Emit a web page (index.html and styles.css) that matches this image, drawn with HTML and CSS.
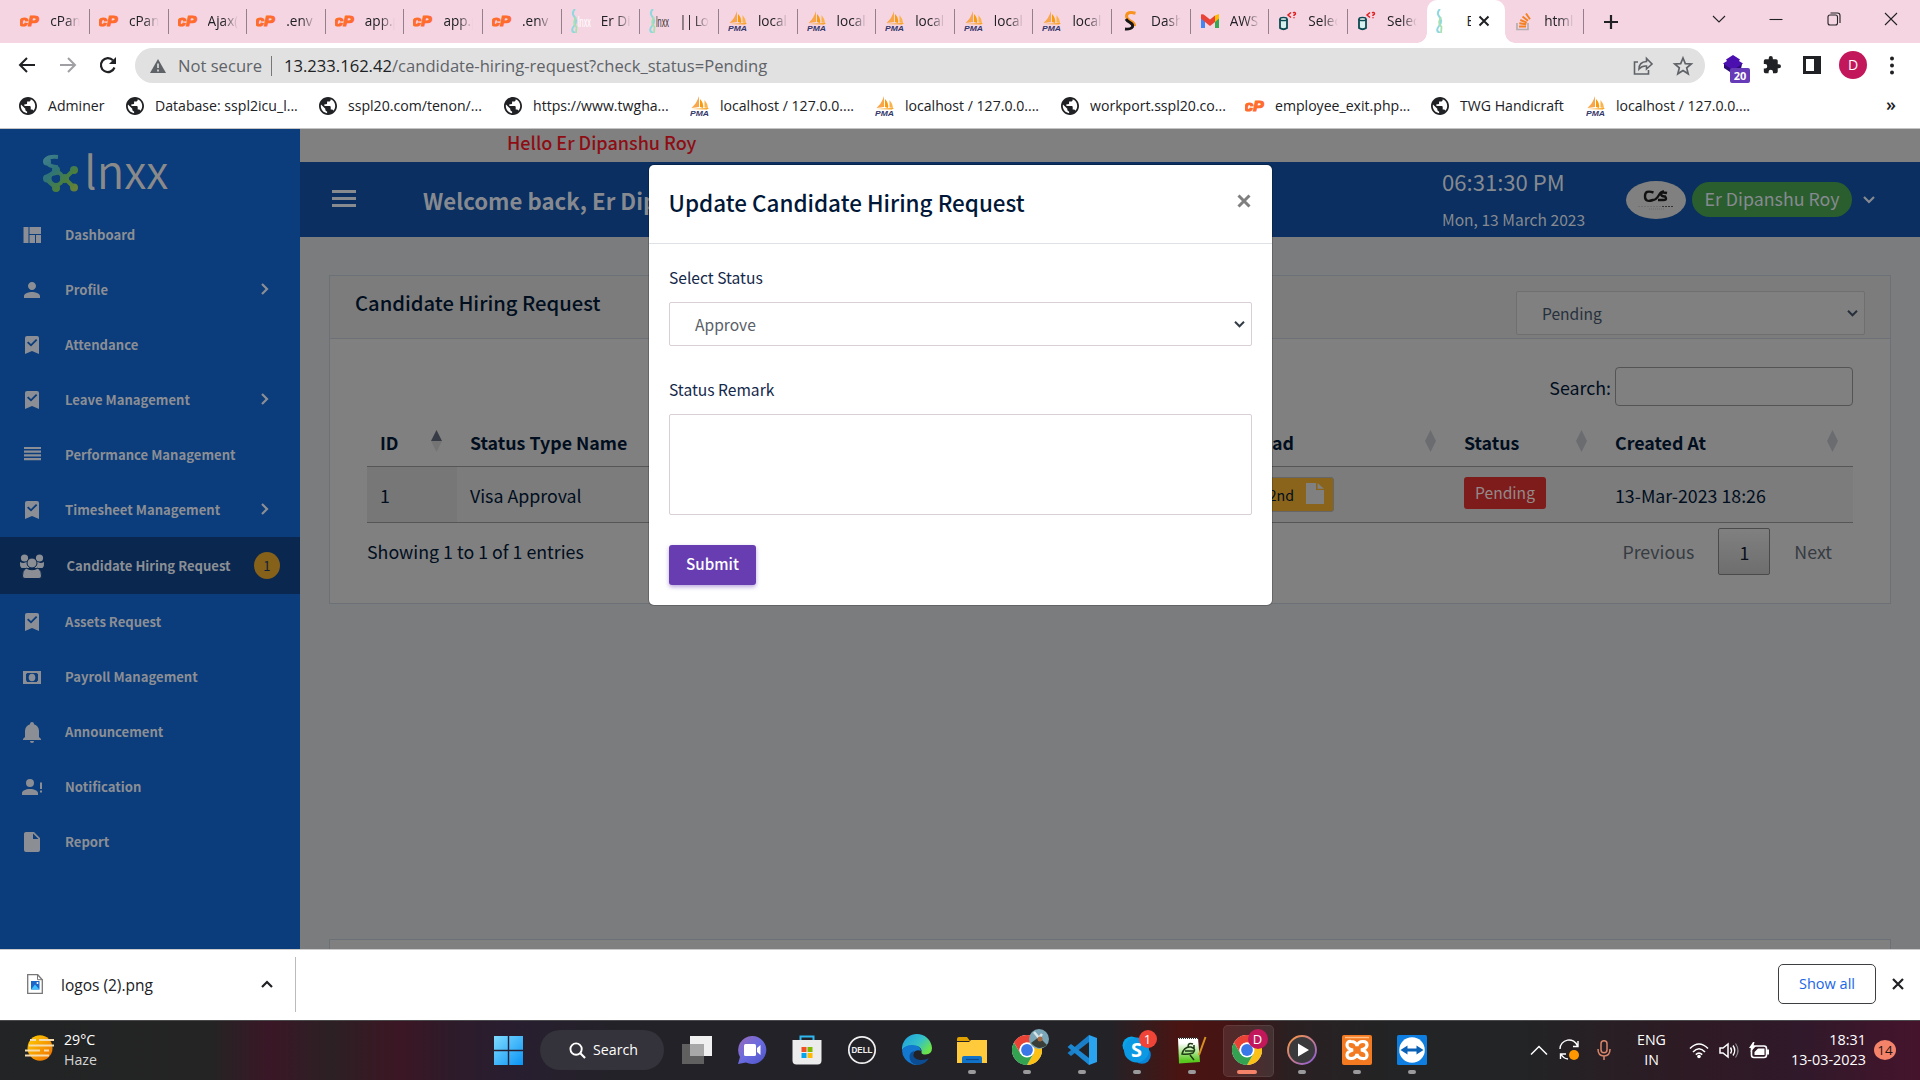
FILE: index.html
```html
<!DOCTYPE html>
<html lang="en">
<head>
<meta charset="utf-8">
<title>Candidate Hiring Request</title>
<link rel="stylesheet" href="styles.css">
</head>
<body>
<svg class="defs" width="0" height="0">
  <defs>
    <linearGradient id="gWin" x1="0" y1="0" x2="1" y2="1"><stop offset="0" stop-color="#7fdcff"/><stop offset="1" stop-color="#0a93f5"/></linearGradient>
    <linearGradient id="gSun" x1="0" y1="0" x2="1" y2="1"><stop offset="0" stop-color="#ffd000"/><stop offset="1" stop-color="#ee6a00"/></linearGradient>
    <linearGradient id="gChat" x1="0" y1="0" x2="1" y2="1"><stop offset="0" stop-color="#9a6bb8"/><stop offset=".5" stop-color="#6a6be0"/><stop offset="1" stop-color="#4f52c8"/></linearGradient>
    <linearGradient id="gEdge" x1="0" y1="0" x2="1" y2=".6"><stop offset="0" stop-color="#1b9de2"/><stop offset=".6" stop-color="#35c1c8"/><stop offset="1" stop-color="#6be34a"/></linearGradient>
    <linearGradient id="gRing" x1="0" y1="0" x2="1" y2="1"><stop offset="0" stop-color="#ff9a3c"/><stop offset="1" stop-color="#8a5be0"/></linearGradient>
    <linearGradient id="gNote" x1="0" y1="0" x2="0" y2="1"><stop offset=".2" stop-color="#fff"/><stop offset=".9" stop-color="#58c81e"/></linearGradient>
    <linearGradient id="gLogo" gradientUnits="userSpaceOnUse" x1="0" y1="0" x2="33" y2="33"><stop offset="0" stop-color="#43808f"/><stop offset=".4" stop-color="#2f7478"/><stop offset=".75" stop-color="#4b7f3c"/><stop offset="1" stop-color="#66803a"/></linearGradient>
    <symbol id="cp" viewBox="0 0 20 16"><text x="-.5" y="12.5" font-family="Liberation Sans, sans-serif" font-weight="700" font-style="italic" font-size="15" fill="#ff6c2c" stroke="#ff6c2c" stroke-width="1.200" textLength="19" lengthAdjust="spacingAndGlyphs">cP</text></symbol>
    <symbol id="pma" viewBox="0 0 20 20"><path d="M9 0 L9 11 L1.500 12 Q7 7 9 0z" fill="#f9a64a"/><path d="M10 3 Q14 7 13 12 L10 11z" fill="#f89c0e"/><path d="M14.500 4 Q18 8 18 12 L14.500 11.500z" fill="#fbb24a"/><path d="M1 13 L19 12 L17 13.500z" fill="#f89c0e"/><text x="0" y="19.500" font-family="Liberation Sans, sans-serif" font-weight="700" font-style="italic" font-size="8" fill="#33376a" textLength="19" lengthAdjust="spacingAndGlyphs">PMA</text></symbol>
    <symbol id="globe" viewBox="2 2 20 20"><circle cx="12" cy="12" r="9" fill="#fff"/><path fill="#202124" d="M12 2C6.480 2 2 6.480 2 12s4.480 10 10 10 10-4.480 10-10S17.520 2 12 2zm-1 17.930c-3.950-.490-7-3.850-7-7.930 0-.620.080-1.210.210-1.790L9 15v1c0 1.100.900 2 2 2v1.930zm6.900-2.540c-.260-.810-1-1.390-1.900-1.390h-1v-3c0-.550-.450-1-1-1H8v-2h2c.550 0 1-.450 1-1V7h2c1.100 0 2-.900 2-2v-.410c2.930 1.190 5 4.060 5 7.410 0 2.080-.800 3.970-2.100 5.390z"/></symbol>
    <symbol id="db" viewBox="0 0 20 20"><path d="M2 8v9q3.500 2.500 7 0V8" fill="#d8f0f0" stroke="#0d4a52" stroke-width="1.800"/><ellipse cx="5.500" cy="8" rx="3.500" ry="1.600" fill="#fff" stroke="#0d4a52" stroke-width="1.500"/><path d="M13 1.500 10 4l3 2.500M15 1.800q2-.8 2.500.6.2 1-1.500 1.800v.8M16 6.300v1" fill="none" stroke="#e02020" stroke-width="1.500"/></symbol>
    <symbol id="helix" viewBox="0 0 20 24"><path d="M4 0Q0 4 3.500 8T3 17 4 24" fill="none" stroke="#8fd8e0" stroke-width="2"/><path d="M5 8Q1 14 5.500 18L5 24" fill="none" stroke="#a8e0b0" stroke-width="1.800"/></symbol>
    <symbol id="chev" viewBox="0 0 10 14"><path d="M2 2l5 5-5 5" fill="none" stroke="currentColor" stroke-width="2.200"/></symbol>
    <symbol id="down" viewBox="0 0 14 10"><path d="M2 2l5 5 5-5" fill="none" stroke="currentColor" stroke-width="2.200"/></symbol>
    <symbol id="mark" viewBox="0 0 24 24"><path fill="currentColor" fill-rule="evenodd" d="M17 3H7a2 2 0 0 0-2 2v16l7-3 7 3V5a2 2 0 0 0-2-2zM11 13.500 7 9.800l1.300-1.300L11 11l5-5 1.300 1.300z"/></symbol>
    <symbol id="chrome" viewBox="0 0 30 30"><circle cx="15" cy="15" r="15" fill="#fff"/><path d="M28 7.500A15 15 0 0 1 15 30l6.500-11.300L15 7.500z" fill="#fbc116"/><path d="M2 7.500A15 15 0 0 0 15 30l6.500-11.300-13 0z" fill="#33a352"/><path d="M2 7.500A15 15 0 0 1 28 7.500H15a7.500 7.500 0 0 0-6.500 11.250z" fill="#ea4335"/><circle cx="15" cy="15" r="7.500" fill="#fff"/><circle cx="15" cy="15" r="5.900" fill="#3b78e7"/></symbol>
  </defs>
</svg>

<div class="tabs">
  <div class="tab"><svg class="fav"><use href="#cp"/></svg><span>cPane</span></div>
  <div class="tab"><svg class="fav"><use href="#cp"/></svg><span>cPane</span></div>
  <div class="tab"><svg class="fav"><use href="#cp"/></svg><span>Ajax(</span></div>
  <div class="tab"><svg class="fav"><use href="#cp"/></svg><span>.env</span></div>
  <div class="tab"><svg class="fav"><use href="#cp"/></svg><span>app.p</span></div>
  <div class="tab"><svg class="fav"><use href="#cp"/></svg><span>app.p</span></div>
  <div class="tab"><svg class="fav"><use href="#cp"/></svg><span>.env</span></div>
  <div class="tab"><svg class="fav lx" viewBox="0 0 20 24"><use href="#helix" width="20" height="24"/><text x="7" y="18" class="lxt" fill="#fff" textLength="13" lengthAdjust="spacingAndGlyphs">lnxx</text></svg><span>Er Dip</span></div>
  <div class="tab"><svg class="fav lx" viewBox="0 0 20 24"><use href="#helix" width="20" height="24"/><text x="7" y="18" class="lxt" fill="#333" textLength="13" lengthAdjust="spacingAndGlyphs">lnxx</text></svg><span class="tight">|| Log</span></div>
  <div class="tab"><svg class="fav"><use href="#pma"/></svg><span>localh</span></div>
  <div class="tab"><svg class="fav"><use href="#pma"/></svg><span>localh</span></div>
  <div class="tab"><svg class="fav"><use href="#pma"/></svg><span>localh</span></div>
  <div class="tab"><svg class="fav"><use href="#pma"/></svg><span>localh</span></div>
  <div class="tab"><svg class="fav"><use href="#pma"/></svg><span>localh</span></div>
  <div class="tab"><svg class="fav" viewBox="0 0 20 20"><path d="M14.500 2.200Q6 0 5.500 5q0 3 4 5 4.500 2 4 5" fill="none" stroke="#f7931e" stroke-width="3"/><path d="M5 8q1 2 4 3.500 3.500 2 2.500 4.500Q9.500 18.500 4 18" fill="none" stroke="#161616" stroke-width="2.800"/></svg><span>Dash</span></div>
  <div class="tab"><svg class="fav" viewBox="0 0 20 20"><path d="M1 5v12h4V9z" fill="#4285f4"/><path d="M19 5v12h-4V9z" fill="#34a853"/><path d="M15 4.500 19 3v4.500L15 11z" fill="#fbbc04"/><path d="M1 3.500Q3 2.500 5 4.500l5 4 5-4V11l-5 4-5-4-4-3.500z" fill="#ea4335"/></svg><span>AWS</span></div>
  <div class="tab"><svg class="fav"><use href="#db"/></svg><span>Select</span></div>
  <div class="tab nosep"><svg class="fav"><use href="#db"/></svg><span>Select</span></div>
  <div class="tab active"><svg class="fav lx" viewBox="0 0 20 24"><use href="#helix" width="20" height="24"/></svg><span>Er</span><svg class="tx" viewBox="0 0 12 12"><path d="M1.500 1.500l9 9m0-9l-9 9" stroke="#202124" stroke-width="2"/></svg></div>
  <div class="tab"><svg class="fav" viewBox="0 0 20 20"><path d="M3 12v6.500h11V12" fill="none" stroke="#b5aeb0" stroke-width="1.700"/><path d="M5 15.500h7M5.300 12.300l7 1M6.300 9l6.500 2.600M8.500 5.500l5.500 4.300M12 2.500l4 5.700" stroke="#f48024" stroke-width="1.900"/></svg><span>html</span></div>
  <svg class="plus" viewBox="0 0 16 16"><path d="M8 1v14M1 8h14" stroke="#202124" stroke-width="2.200"/></svg>
  <div class="wbtns">
    <svg viewBox="0 0 14 14"><path d="M1 4l6 6 6-6" class="thin"/></svg>
    <svg viewBox="0 0 14 14"><path d="M.5 7.500h13" class="thin"/></svg>
    <svg viewBox="0 0 14 14"><rect x="1" y="3" width="9.500" height="10" rx="2" class="thin"/><path d="M3.500 1h7q2.500 0 2.500 2.500V11" class="thin"/></svg>
    <svg viewBox="0 0 14 14"><path d="M1 1l12 12M13 1L1 13" class="thin"/></svg>
  </div>
</div>

<div class="toolbar">
  <div class="nav">
    <svg viewBox="0 0 18 18"><path d="M17 9H2M9 2L2 9l7 7" fill="none" stroke="#202124" stroke-width="2"/></svg>
    <svg viewBox="0 0 18 18"><path d="M1 9h15M9 2l7 7-7 7" fill="none" stroke="#a0a0a4" stroke-width="2"/></svg>
    <svg viewBox="0 0 18 18"><path d="M15.500 11.500A7 7 0 1 1 14 4.200" fill="none" stroke="#202124" stroke-width="2.200"/><path d="M17 1v7h-7z" fill="#202124"/></svg>
  </div>
  <div class="omni">
    <svg class="warn" viewBox="0 0 16 14"><path d="M8 0l8 14H0z" fill="#5f6368"/><path d="M8 4.500v4.500M8 10.500v2" stroke="#e1e1e1" stroke-width="1.600"/></svg>
    <span class="ns">Not secure</span><i></i>
    <span class="url"><b>13.233.162.42</b>/candidate-hiring-request?check_status=Pending</span>
    <svg class="share" viewBox="0 0 20 18"><path d="M5 5H1.500v12h14v-4M6 12q0-7 7.500-7.500V1.500L19 7l-5.500 5V9Q9 8.500 6 12z" fill="none" stroke="#5f6368" stroke-width="1.600"/></svg>
    <svg class="star" viewBox="0 0 20 20"><path d="M10 2l2.300 5.600 6 .4-4.600 3.900 1.500 5.900L10 14.500l-5.200 3.300 1.500-5.900L1.700 8l6-.4z" fill="none" stroke="#5f6368" stroke-width="1.700"/></svg>
  </div>
  <div class="exts">
    <div class="ext"><svg viewBox="0 0 20 20"><path d="M1 9l9-5 9 5-1 5-8 5-9-6z" fill="#2c0a78"/><path d="M10 0l7 4.500-1 1.500 4 2.500L10 15 0 8.500 4 6 3 4.500z" fill="#4b0fb0"/></svg><em>20</em></div>
    <svg class="puz" viewBox="1 1 22 22"><path fill="#202124" d="M20.500 11H19V7c0-1.100-.9-2-2-2h-4V3.500a2.500 2.500 0 0 0-5 0V5H4a2 2 0 0 0-2 2v3.800h1.500a2.700 2.700 0 0 1 0 5.400H2V20a2 2 0 0 0 2 2h3.800v-1.500a2.700 2.700 0 0 1 5.400 0V22H17a2 2 0 0 0 2-2v-4h1.500a2.500 2.500 0 0 0 0-5z"/></svg>
    <svg class="side" viewBox="0 0 18 18"><rect x="1.500" y="1.500" width="15" height="15" fill="none" stroke="#202124" stroke-width="3"/><path d="M11 1h6v16h-6z" fill="#202124"/></svg>
    <div class="ava">D</div>
    <svg class="dots" viewBox="0 0 6 18"><circle cx="3" cy="2" r="2"/><circle cx="3" cy="9" r="2"/><circle cx="3" cy="16" r="2"/></svg>
  </div>
</div>

<div class="marks">
  <div class="bm w1"><svg><use href="#globe"/></svg>Adminer</div>
  <div class="bm w2"><svg><use href="#globe"/></svg>Database: sspl2icu_l...</div>
  <div class="bm w3"><svg><use href="#globe"/></svg>sspl20.com/tenon/...</div>
  <div class="bm w4"><svg><use href="#globe"/></svg>https://www.twgha...</div>
  <div class="bm w5"><svg class="p"><use href="#pma"/></svg>localhost / 127.0.0....</div>
  <div class="bm w5"><svg class="p"><use href="#pma"/></svg>localhost / 127.0.0....</div>
  <div class="bm w5"><svg><use href="#globe"/></svg>workport.sspl20.co...</div>
  <div class="bm w5"><svg class="p"><use href="#cp"/></svg>employee_exit.php...</div>
  <div class="bm w6"><svg><use href="#globe"/></svg>TWG Handicraft</div>
  <div class="bm w5"><svg class="p"><use href="#pma"/></svg>localhost / 127.0.0....</div>
  <span class="more">»</span>
</div>

<div class="page">
  <aside>
    <div class="logo">
      <svg viewBox="0 0 35 37"><g stroke="url(#gLogo)" fill="none" stroke-width="4"><path d="M15 2Q3 1 3 6q2 5 10 6v6Q3 20 4 24q2 4 9 8"/><circle cx="13" cy="23.500" r="6.500"/><path d="M22 23.500l9-9M22 23.500l9 9"/></g><g fill="url(#gLogo)"><circle cx="4" cy="6.500" r="4"/><circle cx="13" cy="15" r="4"/><circle cx="4" cy="23.500" r="4"/><circle cx="13" cy="33" r="4"/><circle cx="31" cy="15" r="4"/><circle cx="31" cy="32.500" r="4"/><circle cx="21.500" cy="23.500" r="4.500"/></g></svg>
      <span>lnxx</span>
    </div>
    <div class="item"><svg viewBox="0 0 24 24"><path fill="currentColor" d="M9.500 20H15v-8H9.500zM3.500 20h5V4h-5zM16 20h5v-8h-5zM9.500 4v7H21V4z"/></svg><span>Dashboard</span></div>
    <div class="item"><svg viewBox="0 0 24 24"><path fill="currentColor" d="M12 12c2.210 0 4-1.790 4-4s-1.790-4-4-4-4 1.790-4 4 1.790 4 4 4zm0 2c-2.670 0-8 1.340-8 4v2h16v-2c0-2.660-5.330-4-8-4z"/></svg><span>Profile</span><svg class="chev"><use href="#chev"/></svg></div>
    <div class="item"><svg><use href="#mark"/></svg><span>Attendance</span></div>
    <div class="item"><svg><use href="#mark"/></svg><span>Leave Management</span><svg class="chev"><use href="#chev"/></svg></div>
    <div class="item"><svg viewBox="0 0 24 24"><path stroke="currentColor" stroke-width="2.200" d="M4 5h17M4 8.700h17M4 12.400h17M4 16.100h17"/></svg><span>Performance Management</span></div>
    <div class="item"><svg><use href="#mark"/></svg><span>Timesheet Management</span><svg class="chev"><use href="#chev"/></svg></div>
    <div class="item on"><svg viewBox="0 0 26 26"><g fill="currentColor"><circle cx="5.500" cy="5" r="3.600"/><circle cx="20.500" cy="5" r="3.600"/><path d="M1 9q4 2 7-.5 0 5 3 6.500H2.500Q.5 13 1 9zM25 9q-4 2-7-.5 0 5-3 6.500h8.500q2-2 1.500-6z"/><circle cx="13" cy="10" r="5" stroke="#0a274f"/><path d="M7 15q6 3.500 12 0 4 3 3.500 8 0 2.500-2.500 2.500H6Q3.500 25.500 3.500 23 3 18 7 15z" stroke="#0a274f"/></g></svg><span>Candidate Hiring Request</span><b>1</b></div>
    <div class="item"><svg><use href="#mark"/></svg><span>Assets Request</span></div>
    <div class="item"><svg viewBox="0 0 24 24"><path fill="currentColor" fill-rule="evenodd" d="M3 6h18v13H3zM6 9v7q0-2 1 1h10q0-2 1-1V9q-1 0-1-1H7q0 1-1 1z"/><ellipse cx="12" cy="12.500" rx="3.300" ry="3.800" fill="currentColor"/></svg><span>Payroll Management</span></div>
    <div class="item"><svg viewBox="0 0 24 24"><path fill="currentColor" d="M21 19v1H3v-1l2-2v-6c0-3.100 2.030-5.830 5-6.710V4a2 2 0 0 1 4 0v.290c2.970.880 5 3.610 5 6.710v6l2 2m-7 2a2 2 0 0 1-4 0"/></svg><span>Announcement</span></div>
    <div class="item"><svg viewBox="0 0 24 24"><path fill="currentColor" d="M10 4a4 4 0 1 1 0 8 4 4 0 0 1 0-8m0 10c4.420 0 8 1.790 8 4v2H2v-2c0-2.210 3.580-4 8-4m10 0V7.500h2V14h-2m0 3.500v-2h2v2z"/></svg><span>Notification</span></div>
    <div class="item"><svg viewBox="0 0 24 24"><path fill="currentColor" d="M13 9V3.500L18.500 9M6 2c-1.110 0-2 .890-2 2v16a2 2 0 0 0 2 2h12a2 2 0 0 0 2-2V8l-6-6H6z"/></svg><span>Report</span></div>
  </aside>

  <main>
    <div class="hello">Hello Er Dipanshu Roy</div>
    <header>
      <div class="burger"><i></i><i></i><i></i></div>
      <div class="welcome">Welcome back, Er Dipanshu Roy</div>
      <div class="clock"><div class="time">06:31:30 PM</div><div class="date">Mon, 13 March 2023</div></div>
      <svg class="co" viewBox="0 0 60 38"><ellipse cx="30" cy="19" rx="30" ry="19" fill="#808080"/><path d="M27.500 11.500q-8.500-3-8.500 3.700t8 3.800q3 0 6-5 2-3.500 5-3.500M41 12q-6-1.500-6 1t4 2.500q3 4-3 3.500l-4 0" fill="none" stroke="#111" stroke-width="2.400"/><path d="M12 25.500h24" stroke="#707070" stroke-dasharray="2 1"/><path d="M36 25.500h12" stroke="#333" stroke-dasharray="2 1"/><path d="M23 28h15" stroke="#6a6a6a" stroke-dasharray="1 1"/></svg>
      <div class="user">Er Dipanshu Roy</div>
      <svg class="ud"><use href="#down"/></svg>
    </header>
    <section class="card">
      <div class="chead"><h2>Candidate Hiring Request</h2><div class="select">Pending<svg><use href="#down"/></svg></div></div>
      <div class="cbody">
        <div class="search">Search:<div class="inp"></div></div>
        <div class="tr th">
          <div>ID<svg class="sort" viewBox="0 0 11 22"><path d="M5.500 0L11 11H0z" fill="#363b46"/><path d="M5.500 22L0 11h11z" fill="#747474"/></svg></div>
          <div>Status Type Name</div>
          <div>Download<svg class="sort" viewBox="0 0 11 22"><path d="M5.500 0L11 11 5.500 22 0 11z" fill="#6a6c70"/></svg></div>
          <div>Status<svg class="sort" viewBox="0 0 11 22"><path d="M5.500 0L11 11 5.500 22 0 11z" fill="#6a6c70"/></svg></div>
          <div>Created At<svg class="sort" viewBox="0 0 11 22"><path d="M5.500 0L11 11 5.500 22 0 11z" fill="#6a6c70"/></svg></div>
        </div>
        <div class="tr td">
          <div>1</div>
          <div>Visa Approval</div>
          <div><span class="doc">2nd<svg viewBox="0 0 18 21"><path d="M0 0h10v7h8v14H0z" fill="#808080"/><path d="M11.500 0v5.800H18z" fill="#808080"/></svg></span></div>
          <div><span class="pend">Pending</span></div>
          <div>13-Mar-2023 18:26</div>
        </div>
        <div class="foot"><span class="info">Showing 1 to 1 of 1 entries</span><span class="pg">Previous</span><span class="pg cur">1</span><span class="pg">Next</span></div>
      </div>
    </section>
    <section class="card2"></section>
  </main>

  <div class="modal">
    <div class="mhead"><h1>Update Candidate Hiring Request</h1><svg viewBox="0 0 14 14"><path d="M1.500 1.500l11 11m0-11l-11 11" stroke="#7f7f7f" stroke-width="3"/></svg></div>
    <div class="mbody">
      <label>Select Status</label>
      <div class="select">Approve<svg><use href="#down"/></svg></div>
      <label>Status Remark</label>
      <div class="area"></div>
      <div class="btn">Submit</div>
    </div>
  </div>
</div>

<div class="dl">
  <svg class="file" viewBox="0 0 16 20"><path d="M.700.700h10l4.600 5v13.600H.700z" fill="#fff" stroke="#777" stroke-width="1.300"/><path d="M10.500.700v5h5" fill="none" stroke="#777"/><rect x="4" y="7" width="8.500" height="8.500" fill="#1a66c8"/><path d="M4 15.500l4-5 4.500 5z" fill="#3ec0ff"/><circle cx="10.500" cy="9" r="1" fill="#fff"/></svg>
  <span>logos (2).png</span>
  <svg class="up" viewBox="0 0 12 8"><path d="M1 7l5-5 5 5" fill="none" stroke="#202124" stroke-width="2.200"/></svg>
  <i></i>
  <div class="show">Show all</div>
  <svg class="cl" viewBox="0 0 12 12"><path d="M1 1l10 10m0-10L1 11" stroke="#202124" stroke-width="2.200"/></svg>
</div>

<div class="task">
  <svg class="sun" viewBox="0 0 30 26"><ellipse cx="15" cy="13" rx="12.500" ry="12.700" fill="url(#gSun)"/><path d="M5 5h6M14 5h15M4 10.500h25M0 15.500h15M19 15.500h5M0 20.500h24" stroke="#f5dcae" stroke-width="2.200"/></svg>
  <div class="wx"><div>29°C</div><div class="hz">Haze</div></div>
  <svg class="win" viewBox="0 0 29 29"><path d="M0 0h13.800v13.800H0zM15.200 0H29v13.800H15.200zM0 15.200h13.800V29H0zM15.200 15.200H29V29H15.200z" fill="url(#gWin)"/></svg>
  <div class="find"><svg viewBox="0 0 18 18"><circle cx="7.500" cy="7.500" r="6" fill="none" stroke="#fff" stroke-width="2"/><path d="M12 12l5 5" stroke="#fff" stroke-width="2.200"/></svg>Search</div>
  <div class="apps">
    <div class="app"><svg viewBox="0 0 30 30"><path d="M8 1h22v20H8z" fill="#f0f0f0"/><path d="M0 9h22v20H0z" fill="#606060"/><path d="M8 9h14v12H8z" fill="#a8a8a8"/></svg></div>
    <div class="app"><svg viewBox="0 0 30 30"><path d="M15 1a14 14 0 1 1-6 26.500L1 29l2-7A14 14 0 0 1 15 1z" fill="url(#gChat)"/><rect x="7" y="9" width="12" height="12" rx="1.500" fill="#fff"/><path d="M20 13l3.500-3v10L20 17z" fill="#fff"/></svg></div>
    <div class="app"><svg viewBox="0 0 30 30"><path d="M8.500 7V1.500h13V7" fill="none" stroke="#2fb7f0" stroke-width="2"/><path d="M.500 5h29v20.500q0 4-4 4h-21q-4 0-4-4z" fill="#ececec"/><path d="M9.500 12h5v5h-5z" fill="#f25022"/><path d="M15.500 12h5v5h-5z" fill="#7fba00"/><path d="M9.500 18h5v5h-5z" fill="#00a4ef"/><path d="M15.500 18h5v5h-5z" fill="#ffb900"/></svg></div>
    <div class="app"><svg viewBox="0 0 30 30"><circle cx="15" cy="15" r="13.200" fill="none" stroke="#f0f0f0" stroke-width="1.700"/><text x="4.500" y="18.300" class="dell" textLength="21" lengthAdjust="spacingAndGlyphs">DELL</text></svg></div>
    <div class="app"><svg viewBox="0 0 30 30"><path d="M0 15A15 15 0 0 1 30 13q0 6-6.500 6.500-4 0-4-2 1-5-5-6.500Q4 10 0 15z" fill="url(#gEdge)"/><path d="M0 15q3-5 10-5 9 0 9 6-4-2-7 1-3 5 2 9 4 3 9 1-6 4-12 2.500A15 15 0 0 1 0 15z" fill="#1278d0"/><path d="M12 16q-3 8 6 9 5 .5 9-2-4 7-12 7-8-2-7.500-9 .5-4 4.500-5z" fill="#0c4c92"/></svg></div>
    <div class="app run"><svg viewBox="0 0 30 30"><path d="M0 4q0-2 2-2h8l3 4H0z" fill="#e0a100"/><path d="M0 7h12l2-2h16v23H0z" fill="#ffcb3d"/><path d="M5 28v-5q0-2 2-2h16q2 0 2 2v5z" fill="#1173c8"/><path d="M9 24.500h13" stroke="#0a4a8c" stroke-width="1.200"/></svg></div>
    <div class="app run"><svg><use href="#chrome"/></svg><svg class="face" viewBox="0 0 20 20"><circle cx="10" cy="10" r="10" fill="#7aa6b8"/><path d="M2 14l8-6 8 8q-8 7-16-2z" fill="#3a3e38"/><path d="M5 3l5 6 3-4" stroke="#d8e4e8" stroke-width="2.500" fill="none"/><circle cx="11" cy="10" r="2.500" fill="#a56840"/></svg></div>
    <div class="app run"><svg viewBox="0 0 30 30"><path d="M22 0v7L4 21l-3.500-3L22 0z" fill="#1a7fc8"/><path d="M22 30v-7L4 9 .500 12 22 30z" fill="#1c88d4"/><path d="M22 0l8 3v24l-8 3z" fill="#2ba4f0"/></svg></div>
    <div class="app run"><svg viewBox="0 0 30 30"><circle cx="9.500" cy="10.500" r="9" fill="#0aa4e8"/><circle cx="20" cy="20" r="8.800" fill="#0a84d8"/><circle cx="14.500" cy="15" r="12.500" fill="#0b99e4"/><text x="14.500" y="22" text-anchor="middle" class="sk">S</text></svg><em class="bd">1</em></div>
    <div class="app run"><svg viewBox="0 0 30 30"><path d="M1 3h20l2 24-21 1.500z" fill="url(#gNote)"/><path d="M2 3h19" stroke="#333" stroke-width="2" stroke-dasharray="1 1"/><path d="M5 19q2-8 9-7 6 2 2 6-6 2-11 1zM11 12q0-5 5-3M13 20l4 5M8 16h9M17 10v4" fill="none" stroke="#1d3a14" stroke-width="1.500"/><path d="M28.500 2L22 20" stroke="#d89020" stroke-width="2"/></svg></div>
    <div class="app run cur"><svg><use href="#chrome"/></svg><em class="bd d">D</em></div>
    <div class="app run"><svg viewBox="0 0 30 30"><circle cx="15" cy="15" r="14" fill="#3a3a3c" stroke="url(#gRing)" stroke-width="1.900"/><path d="M11 8.500L22 15l-11 6.500z" fill="#fff"/></svg></div>
    <div class="app run"><svg viewBox="0 0 30 30"><rect width="30" height="30" rx="2" fill="#f37a20"/><path d="M3 2.500h24" stroke="#ffc08a" stroke-width="1.500"/><path d="M11 15q-6-1-6-5t4-3.500q5 0 6 4.500 1-4.500 6-4.500 4 0 4 3.500t-6 5q6 1 6 5t-4 3.500q-5 0-6-4.500-1 4.500-6 4.500-4 0-4-3.500t6-5z" fill="none" stroke="#fff" stroke-width="3.200"/></svg></div>
    <div class="app run"><svg viewBox="0 0 30 30"><rect width="30" height="30" rx="1.500" fill="#0e7fe0"/><circle cx="15" cy="15" r="12.800" fill="#fff"/><path d="M3.500 15l7-4.500V13.500h9V10.500l7 4.500-7 4.500V16.500h-9v3z" fill="#0a62b8"/></svg></div>
  </div>
  <div class="tray">
    <svg class="t1" viewBox="0 0 16 10"><path d="M0 9.500l8-8 8 8" fill="none" stroke="#fff" stroke-width="1.500"/></svg>
    <svg class="t2" viewBox="0 0 20 20"><path d="M1 9A9 9 0 0 1 18.500 6M19 1v5.500h-5M1.500 19v-5H7M2 14q2 4.500 7 5" fill="none" stroke="#fff" stroke-width="1.400"/><circle cx="15" cy="15" r="5" fill="#ff9800"/></svg>
    <svg class="t3" viewBox="0 0 14 20"><rect x="4" y=".8" width="6" height="12" rx="3" fill="none" stroke="#d8866a" stroke-width="1.500"/><path d="M1 9q0 7 6 7t6-7M7 16v4" fill="none" stroke="#d8866a" stroke-width="1.500"/></svg>
    <div class="lang">ENG<br>IN</div>
    <svg class="t4" viewBox="0 0 20 16"><path d="M1 6q9-9 18 0M4 9.500q6-6.500 12 0M6.800 12.200q3.200-3 6.400 0" fill="none" stroke="#fff" stroke-width="1.600"/><circle cx="10" cy="14" r="1.800" fill="#fff"/></svg>
    <svg class="t5" viewBox="0 0 20 16"><path d="M1 5.500h3l5-4v13l-5-4H1z" fill="none" stroke="#fff" stroke-width="1.500"/><path d="M11.500 5q2 3 0 6M14 3q3.500 5 0 10" fill="none" stroke="#fff" stroke-width="1.400"/><path d="M16.500 1q5 7 0 14" fill="none" stroke="#888" stroke-width="1.200"/></svg>
    <svg class="t6" viewBox="0 0 20 17"><rect x="2.500" y="4" width="15" height="11.500" rx="2.500" fill="none" stroke="#fff" stroke-width="1.600"/><path d="M9 6.500h6.500v6.500H5.500v-3zM18 7.500h2v5h-2zM4 0L0 6h2.500L1.500 10 7 4H4.500L5.500 0z" fill="#fff"/></svg>
    <div class="when">18:31<br>13-03-2023</div>
    <div class="cnt">14</div>
  </div>
</div>
</body>
</html>
```
FILE: styles.css
```css
* { box-sizing: border-box; }
body { margin: 0; width: 1920px; height: 1080px; overflow: hidden; display: flex; flex-direction: column; background: #fff; color: #202124; font-family: "Open Sans", "Noto Sans", sans-serif; font-size: 14.1px; white-space: nowrap; }
svg { display: block; flex: none; overflow: visible; }
.defs { position: absolute; }
h1, h2 { margin: 0; font-weight: 500; }

/* browser tabs */
.tabs { height: 43px; flex: none; background: #f6d5e3; display: flex; align-items: center; padding-left: 11.300px; }
.tab { width: 78.640px; height: 43px; flex: none; display: flex; align-items: center; padding: 0 0 1px 9px; position: relative; font-size: 13.600px; line-height: 20px; }
.tab::after { content: ""; position: absolute; right: 0; top: 9px; width: 1px; height: 25px; background: #94808a; }
.tab.nosep::after, .tab.active::after { display: none; }
.tab .fav { width: 20px; height: 20px; margin-right: 10px; }
.tab .fav.lx { height: 24px; }
.tab span { width: 30px; overflow: hidden; -webkit-mask-image: linear-gradient(90deg, #000 50%, transparent 100%); mask-image: linear-gradient(90deg, #000 50%, transparent 100%); }
.tab span.tight { letter-spacing: -1px; }
.lxt { font-family: "Liberation Sans", sans-serif; font-size: 15px; }
.tab.active { background: #fff; border-radius: 10px 10px 0 0; }
.tab.active::before { content: ""; position: absolute; left: -10px; right: -10px; bottom: 0; height: 10px; background: radial-gradient(circle at 0 0, transparent 9.500px, #fff 10px) left / 10px 10px no-repeat, radial-gradient(circle at 100% 0, transparent 9.500px, #fff 10px) right / 10px 10px no-repeat; }
.tab.active span { width: 4px; margin-left: 1px; -webkit-mask-image: none; mask-image: none; }
.tab.active .tx { width: 12px; height: 12px; margin-left: 7px; }
.plus { width: 16px; height: 16px; margin-left: 19px; }
.wbtns { display: flex; gap: 43.300px; margin: -5px 22px 0 auto; }
.wbtns svg { width: 14px; height: 14px; }
.thin { fill: none; stroke: #222; stroke-width: 1.100; }

/* toolbar */
.toolbar { height: 45px; flex: none; display: flex; align-items: center; }
.nav { display: flex; gap: 22.500px; width: 135px; padding-left: 18px; margin-top: -1px; }
.nav svg { width: 18px; height: 18px; }
.omni { width: 1570px; height: 35px; border-radius: 18px; background: #e1e1e1; display: flex; align-items: center; font-size: 16.600px; color: #5f6368; }
.warn { width: 16px; height: 14px; margin: 0 12px 0 15px; }
.ns { width: 93px; }
.omni i { width: 1px; height: 20px; background: #777; margin-right: 12px; }
.url b { font-weight: 400; color: #202124; }
.share { width: 20px; height: 18px; margin-left: auto; }
.star { width: 20px; height: 20px; margin: 0 12px 0 20px; }
.exts { display: flex; align-items: center; flex: 1; padding-left: 18px; margin-top: -1px; }
.ext { position: relative; width: 20px; height: 20px; margin-right: 20px; }
.ext svg { width: 20px; height: 20px; }
.ext em { position: absolute; left: 7px; top: 13px; width: 20px; height: 15px; border-radius: 2px; background: #673ab7; color: #fff; font: 700 11px/15px "Open Sans", sans-serif; text-align: center; }
.puz { width: 18px; height: 18px; margin-right: 22px; }
.side { width: 18px; height: 18px; margin-right: 18px; }
.ava { width: 28px; height: 28px; border-radius: 50%; background: #c2185b; color: #fff; line-height: 28px; text-align: center; margin-right: 22px; }
.dots { width: 6px; height: 19px; fill: #202124; }

/* bookmarks */
.marks { height: 41px; flex: none; border-bottom: 1px solid #c4c4c4; display: flex; align-items: center; padding: 0 0 4px 19px; }
.bm { display: flex; align-items: center; gap: 11px; width: 185px; line-height: 20px; }
.bm svg { width: 18px; height: 18px; }
.bm svg.p { width: 20px; height: 20px; margin: 0 -1px; }
.w1 { width: 107px; } .w2 { width: 193px; } .w3 { width: 185px; } .w4 { width: 187px; } .w6 { width: 156px; }
.more { margin-left: auto; margin-right: 24px; font-size: 18px; font-weight: 600; line-height: 20px; padding-bottom: 5px; }

/* application page */
.page { height: 820px; flex: none; position: relative; display: flex; background: #7b7c7e; font-family: "Noto Sans CJK SC", "Noto Sans", sans-serif; overflow: hidden; color: #000e1e; }
aside { width: 300px; flex: none; background: #0b3c7b; color: #8b8f95; padding-top: 23px; }
.logo { display: flex; height: 55.500px; padding-left: 43px; gap: 6px; }
.logo svg { width: 35px; height: 37px; margin-top: 3px; }
.logo span { font: 350 45.500px/40px "Noto Sans CJK SC", sans-serif; color: #8a8a8a; margin-top: -3px; }
.item { height: 55px; display: flex; align-items: center; padding-left: 20px; font-size: 13.100px; font-weight: 700; line-height: 20px; }
.item svg { width: 24px; height: 24px; margin-right: 21px; }
.item svg.chev { width: 10px; height: 14px; margin: -2px 30px 0 auto; }
.item.on { height: 57px; background: #0a274f; margin-top: -.5px; }
.item.on svg { width: 26px; height: 26px; margin: 0 21.500px 0 -1px; }
.item.on b { margin: 0 20px 0 auto; width: 26px; height: 27px; border-radius: 50%; background: #85611a; color: #10203a; font-weight: 400; line-height: 27px; text-align: center; }

main { flex: 1; display: flex; flex-direction: column; }
main > * { flex: none; }
.hello { height: 33px; background: #808080; color: #8e0d14; font-weight: 500; font-size: 18px; line-height: 27px; padding-left: 207px; }
header { height: 75px; background: #0a2f60; color: #868a90; display: flex; align-items: center; }
.burger { width: 24px; margin: 0 67px 2px 32px; display: flex; flex-direction: column; gap: 4.500px; }
.burger i { height: 2.600px; background: #878a8f; }
.welcome { width: 1019px; font-size: 22.200px; font-weight: 700; line-height: 30px; padding-top: 1px; }
.clock { width: 184px; line-height: 37px; padding-top: 1px; }
.time { font-size: 22.100px; }
.date { font-size: 15.600px; padding-top: 1px; }
.co { width: 60px; height: 38px; margin-right: 6px; }
.user { width: 160px; height: 35px; border-radius: 18px; background: #2b5e2e; text-align: center; font-size: 17.800px; line-height: 33px; margin-right: 10px; }
.ud { width: 14px; height: 10px; }

.card { margin: 38px 29px 0; height: 329px; border: 1px solid #6c7077; background: #808080; }
.chead { height: 63px; background: #7c7c7c; border-bottom: 1px solid #6c7077; display: flex; justify-content: space-between; padding: 15px 25px 0; }
.chead h2 { font-size: 20.200px; line-height: 24px; }
.select { height: 44px; border: 1px solid #6f6e70; border-radius: 2px; background: #808080; color: #26303c; font-size: 15.600px; line-height: 42px; padding: 0 5px 0 25px; display: flex; justify-content: space-between; align-items: center; }
.select svg { width: 13px; height: 9px; }
.chead .select { width: 349px; }
.cbody { padding: 28px 37px 0; font-size: 17.800px; }
.search { display: flex; justify-content: flex-end; align-items: center; gap: 4px; height: 39px; line-height: 20px; }
.inp { width: 238px; height: 39px; border: 1px solid #545454; border-radius: 4px; }
.tr { display: grid; grid-template-columns: 90px 735px 259px 151px 251px; border-bottom: 1px solid #565656; }
.tr > div { padding-left: 13px; display: flex; align-items: center; line-height: 24px; }
.th { height: 61px; font-weight: 700; padding-top: 12px; }
.sort { width: 11px; height: 22px; margin: -2px 15px 0 auto; }
.td { height: 56px; background: #7c7c7c; }
.td > div:first-child { background: #777; }
.doc { width: 133px; margin-left: -4px; height: 35px; border: 1px solid #666; border-radius: 3px; background: #8a641a; font-size: 14.200px; display: flex; align-items: center; justify-content: flex-end; gap: 12px; padding-right: 9px; }
.doc svg { width: 18px; height: 21px; margin-top: -2px; }
.pend { width: 82px; height: 32px; margin-top: -3px; border-radius: 3px; background: #7e1c1c; color: #948a8a; font-size: 15.600px; line-height: 31px; text-align: center; }
.foot { display: flex; align-items: flex-start; padding-top: 5px; line-height: 46px; }
.info { margin-right: auto; }
.pg { color: #363b42; padding: 0 21px; }
.cur.pg { width: 52px; height: 47px; border: 1px solid #4a4a4a; border-radius: 2px; text-align: center; padding: 0; margin: 0 3px; color: #0a0f18; background: linear-gradient(#808080, #6e6e6e); }
.card2 { margin: 335px 29px 0; height: 20px; border: 1px solid #6c7077; background: #808080; }

/* dialog */
.modal { position: absolute; left: 649px; top: 36px; width: 623px; height: 440px; background: #fff; border-radius: 5px; color: #001737; box-shadow: 0 0 0 1px rgba(0,0,0,.2); }
.mhead { height: 79px; border-bottom: 1px solid #dee2e6; padding: 22px 21px 0 19.500px; display: flex; justify-content: space-between; }
.mhead h1 { font-size: 22.450px; line-height: 31px; }
.mhead svg { width: 14px; height: 14px; margin-top: 7px; }
.mbody { padding: 23px 20px 0; }
.modal label { display: block; height: 35px; line-height: 20px; font-size: 15.600px; color: #14284a; }
.modal .select { background: #fff; border-color: #d9cfd6; color: #5a6068; margin-bottom: 33px; line-height: 40px; }
.modal .select svg { color: #333c46; }
.area { height: 101px; border: 1px solid #d9cfd6; border-radius: 2px; margin: 0 0 30px; }
.btn { width: 87px; height: 40px; border-radius: 3px; background: #673db1; color: #fff; font-weight: 500; font-size: 15.200px; line-height: 37px; text-align: center; box-shadow: 0 2px 4px rgba(103,61,177,.45); }

/* downloads bar */
.dl { height: 71px; flex: none; border-top: 1px solid #ccc; display: flex; align-items: center; padding: 0 0 2px 27px; font-size: 15.500px; }
.file { width: 16px; height: 20px; margin-right: 18px; }
.dl span { width: 200px; padding-top: 1px; }
.up { width: 12px; height: 8px; }
.dl i { width: 1px; height: 55px; background: #bbb; margin-left: 22px; }
.show { margin-left: auto; width: 98px; height: 40px; border: 1px solid #3c4043; border-radius: 5px; color: #1a66e8; font-size: 14.500px; line-height: 37px; text-align: center; }
.cl { width: 12px; height: 12px; margin: 0 16px 0 16px; }

/* taskbar */
.task { height: 60px; flex: none; border-top: 1px solid #4a4a4c; display: flex; align-items: center; color: #fff; background: linear-gradient(90deg, #222425 0, #242424 210px, #3a1726 270px, #2c2024 330px, #3c1624 400px, #2e1b2a 450px, #281e30 510px, #232228 620px, #232227 1110px, #4a1412 1180px, #441414 1230px, #2a2022 1290px, #222425 1400px, #222425 1520px, #2e1a24 1690px, #30192a 1800px, #45142c 1920px); padding: 0 0 1px 25px; font-size: 14.200px; line-height: 20px; }
.sun { width: 30px; height: 26px; margin: -4px 9px 0 0; }
.wx { width: 430px; margin-top: -1px; }
.hz { color: #d4d4d4; }
.win { width: 29px; height: 29px; margin-right: 17px; }
.find { width: 124px; height: 40px; border-radius: 20px; background: #34323a; display: flex; align-items: center; padding-left: 29px; gap: 7px; }
.find svg { width: 17px; height: 17px; }
.apps { display: flex; padding-left: 5.500px; }
.app { width: 55px; height: 58px; display: flex; align-items: center; justify-content: center; position: relative; }
.app svg { width: 30px; height: 30px; position: relative; }
.app.run::after { content: ""; position: absolute; left: 23.500px; top: 49px; width: 8px; height: 4px; border-radius: 2px; background: #9a9a9c; }
.app.cur::after { left: 17.500px; width: 20px; background: #f5836a; }
.app.cur::before { content: ""; position: absolute; left: 3px; top: 4px; width: 49px; height: 50px; border-radius: 5px; background: rgba(255,255,255,.09); border: 1px solid rgba(255,255,255,.08); }
.app .face { position: absolute; width: 20px; height: 20px; left: 29px; top: 8px; }
.bd { position: absolute; left: 29px; top: 9px; width: 18px; height: 18px; border-radius: 50%; background: #f04438; font: 400 13px/18px "Open Sans", sans-serif; text-align: center; }
.bd.d { background: #c2185b; width: 20px; height: 20px; left: 28px; line-height: 20px; top: 8px; }
.dell { font: 700 9px "Liberation Sans", sans-serif; fill: #f0f0f0; }
.sk { font: 700 20px "Open Sans", sans-serif; fill: #fff; }
.tray { flex: 1; display: flex; align-items: center; padding-left: 91px; }
.t1 { width: 16px; height: 10px; margin-right: 12px; }
.t2 { width: 20px; height: 20px; margin-right: 18px; }
.t3 { width: 14px; height: 20px; margin-right: 26px; }
.lang { width: 30px; text-align: center; margin-right: 22px; }
.t4, .t5, .t6 { width: 20px; height: 17px; margin-right: 10px; }
.when { margin-left: auto; text-align: right; margin-right: 8px; font-size: 14.400px; margin-top: -1px; }
.cnt { width: 22px; height: 20px; border-radius: 50%; background: #f5836a; color: #1c1214; text-align: center; margin-right: 24px; font-size: 13.500px; }
```
